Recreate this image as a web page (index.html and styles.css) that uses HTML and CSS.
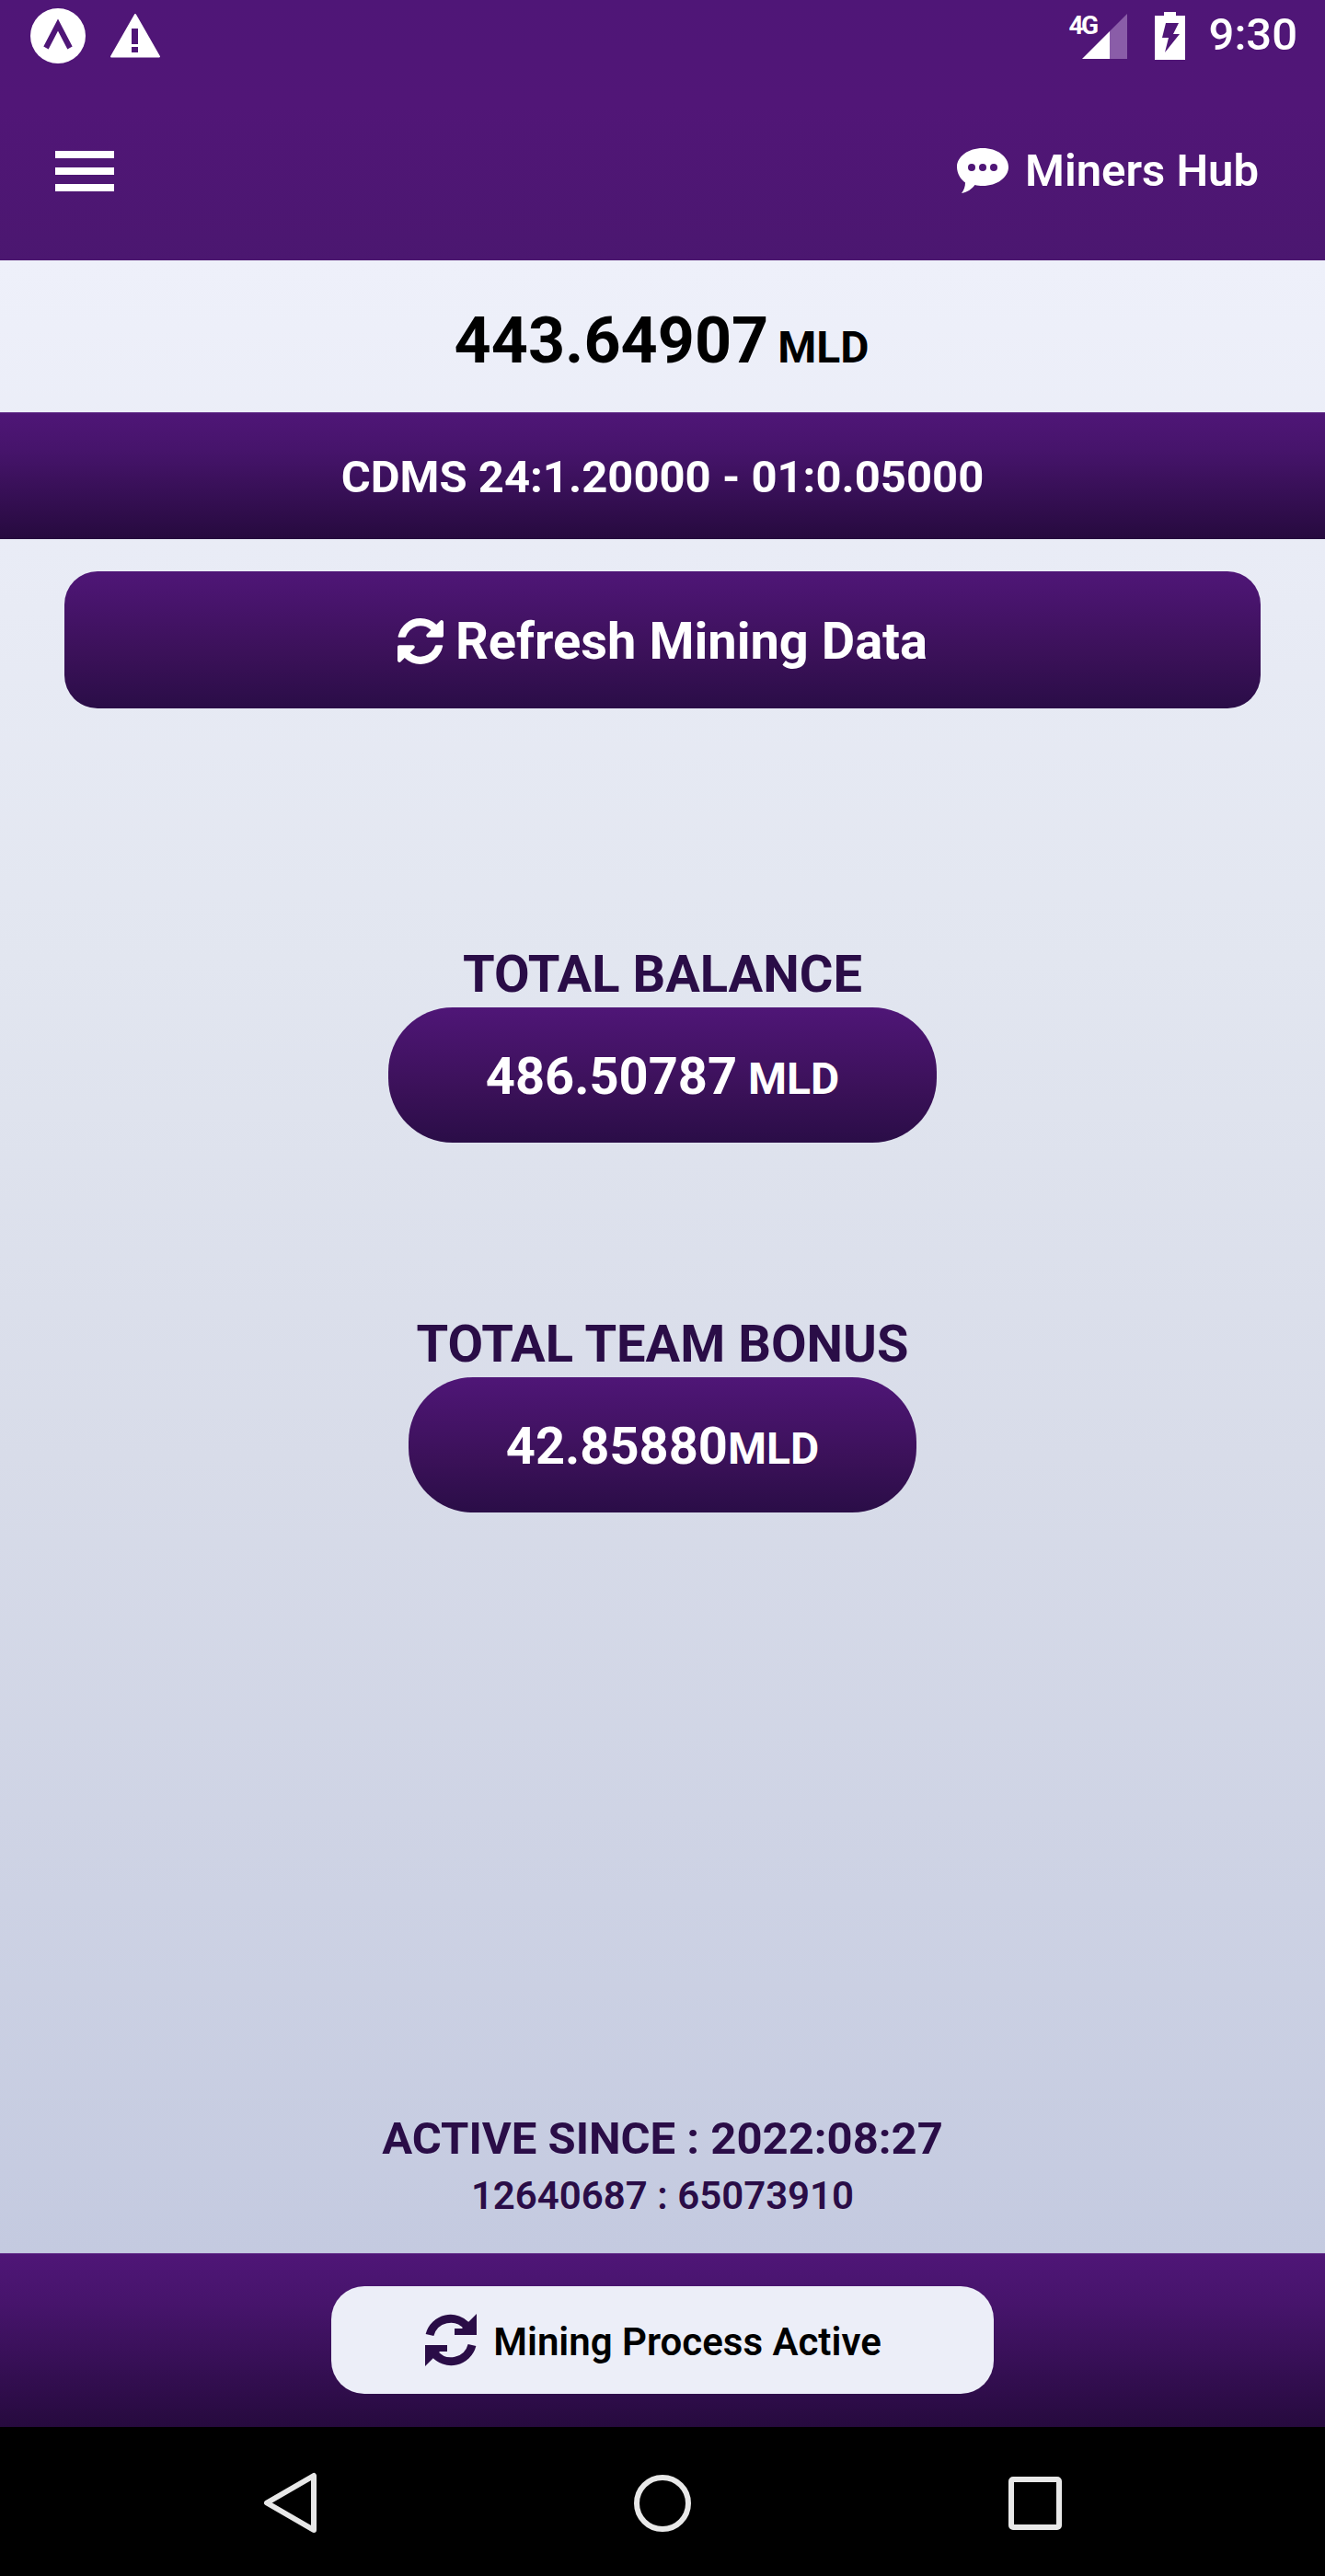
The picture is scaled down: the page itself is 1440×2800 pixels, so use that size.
FILE: index.html
```html
<!doctype html>
<html>
<head>
  <title>Miners Hub</title>
  <link rel="stylesheet" href="styles.css">
</head>
<body>
  <div class="app">
    <header class="top">
      <div class="status">
        <div class="status-left">
          <svg class="ic-logo" viewBox="0 0 60 60"><circle cx="30" cy="30" r="30" fill="#fff"/><path d="M17 43 30 18 43 43" fill="none" stroke="#4f1677" stroke-width="6"/></svg>
          <svg class="ic-warn" viewBox="0 0 54 48"><path d="M27 1 53 46.500H1z" fill="#fff" stroke="#fff" stroke-width="2" stroke-linejoin="round"/><rect x="23" y="16" width="7" height="17" fill="#4f1677"/><rect x="23" y="36" width="7" height="6" fill="#4f1677"/></svg>
        </div>
        <div class="status-right">
          <div class="signal">
            <span class="net">4G</span>
            <svg class="ic-signal" viewBox="0 0 49 49"><path d="M0 49 30 19V49z" fill="#fff"/><path d="M30 19 49 0V49H30z" fill="#8a5da8"/></svg>
          </div>
          <svg class="ic-battery" viewBox="0 0 33 52"><path d="M10 0h13v4h10v48H0V4h10z" fill="#fff"/><path d="M12 12h14l-6 12h7L11 44l4-16H8z" fill="#4f1677"/></svg>
          <span class="time">9:30</span>
        </div>
      </div>
      <div class="toolbar">
        <div class="burger"><i></i><i></i><i></i></div>
        <div class="hub">
          <svg class="ic-chat" viewBox="13 13 56 49"><path d="M41 13c15.500 0 28 9 28 20.500S56.500 54 41 54c-3 0-6-.3-8.500-1-3 4-8 8-14.500 9 2.500-3 4-7 4-11.500C17 47 13 40.500 13 33.500 13 22 25.500 13 41 13z" fill="#fff"/><circle cx="29" cy="34" r="4" fill="#4f1677"/><circle cx="41" cy="34" r="4" fill="#4f1677"/><circle cx="53" cy="34" r="4" fill="#4f1677"/></svg>
          <span>Miners Hub</span>
        </div>
      </div>
    </header>

    <main class="content">
      <div class="wallet"><span class="wallet-num">443.64907</span><span class="wallet-unit">MLD</span></div>
      <div class="band rate">CDMS 24:1.20000 - 01:0.05000</div>
      <button class="refresh">
        <svg class="ic-refresh" viewBox="128 128 1536 1536"><path fill="#fff" d="M1639 1056q0 5-1 7-64 268-268 434.500t-478 166.500q-146 0-282.500-55t-243.500-157l-129 129q-19 19-45 19t-45-19-19-45v-448q0-26 19-45t45-19h448q26 0 45 19t19 45-19 45l-137 137q71 66 161 102t187 36q134 0 250-65t186-179q11-17 53-117 8-23 30-23h192q13 0 22.500 9.500t9.500 22.500zm25-800v448q0 26-19 45t-45 19h-448q-26 0-45-19t-19-45 19-45l138-138q-148-137-349-137-134 0-250 65t-186 179q-11 17-53 117-8 23-30 23h-199q-13 0-22.500-9.500t-9.500-22.500v-7q65-268 270-434.500t480-166.500q146 0 284 55.500t245 156.500l130-129q19-19 45-19t45 19 19 45z"/></svg>
        <span>Refresh Mining Data</span>
      </button>

      <section class="stat stat-first">
        <h2>TOTAL BALANCE</h2>
        <div class="pill"><span class="pill-num">486.50787</span><span class="pill-unit spaced">MLD</span></div>
      </section>
      <section class="stat stat-second">
        <h2>TOTAL TEAM BONUS</h2>
        <div class="pill"><span class="pill-num">42.85880</span><span class="pill-unit">MLD</span></div>
      </section>

      <div class="since">
        <div class="since-date">ACTIVE SINCE : 2022:08:27</div>
        <div class="since-ids">12640687 : 65073910</div>
      </div>
    </main>

    <div class="band process">
      <button class="process-btn">
        <svg class="ic-sync" viewBox="12 10 56 57"><g><path d="M17 33A23.500 23.500 0 0 1 58 24" fill="none" stroke="#2a0d47" stroke-width="9"/><path d="M68 10V33H44V26H52z" fill="#2a0d47"/></g><g transform="rotate(180 40 38.500)"><path d="M17 33A23.500 23.500 0 0 1 58 24" fill="none" stroke="#2a0d47" stroke-width="9"/><path d="M68 10V33H44V26H52z" fill="#2a0d47"/></g></svg>
        <span>Mining Process Active</span>
      </button>
    </div>

    <nav class="navbar">
      <svg class="ic-back" viewBox="0 0 58 67"><path d="M55 4V63L4 33.500z" fill="none" stroke="#e8e8e8" stroke-width="6" stroke-linejoin="round"/></svg>
      <svg class="ic-home" viewBox="0 0 62 62"><circle cx="31" cy="31" r="28" fill="none" stroke="#e8e8e8" stroke-width="6"/></svg>
      <svg class="ic-recent" viewBox="0 0 58 58"><rect x="3" y="3" width="52" height="52" rx="2" fill="none" stroke="#e8e8e8" stroke-width="6"/></svg>
    </nav>
  </div>
</body>
</html>
```

FILE: styles.css
```css
* { box-sizing: border-box; }
body { margin: 0; background: #000; font-family: Roboto, "Liberation Sans", sans-serif; }
svg { display: block; flex: none; }
button { font-family: inherit; border: none; cursor: pointer; }

.app { width: 1440px; height: 2800px; display: flex; flex-direction: column; }

.top { height: 283px; color: #fff; background: linear-gradient(#4f1677, #511677 40%, #4b1770); }
.status { height: 88px; display: flex; justify-content: space-between; align-items: flex-start; padding: 9px 30px 0 33px; }
.status-left { display: flex; gap: 27px; }
.ic-logo { width: 60px; height: 60px; }
.ic-warn { width: 54px; height: 48px; margin-top: 6px; }
.status-right { display: flex; align-items: flex-start; }
.signal { position: relative; width: 49px; margin-top: 6px; }
.ic-signal { width: 49px; height: 49px; }
.net { position: absolute; left: -14px; top: -2px; font-size: 28px; line-height: 30px; font-weight: 700; letter-spacing: -2.500px; }
.ic-battery { width: 33px; height: 52px; margin: 4px 0 0 30px; }
.time { margin: 0 0 0 26px; font-size: 49px; line-height: 58px; font-weight: 500; }

.toolbar { height: 195px; display: flex; justify-content: space-between; align-items: center; padding: 0 72px 0 60px; }
.burger { width: 64px; display: flex; flex-direction: column; gap: 10px; }
.burger i { display: block; height: 8px; background: #fff; }
.hub { display: flex; align-items: center; gap: 18px; font-size: 49px; font-weight: 600; }
.ic-chat { width: 56px; height: 49px; }

.content { flex: 1; display: flex; flex-direction: column; background: linear-gradient(#eef0fa, #e2e6f0 35%, #d8dce9 60%, #c4cae0); }
.wallet { height: 165px; display: flex; justify-content: center; align-items: baseline; gap: 10px; padding: 47px 2px 0 0; color: #000; font-weight: 700; line-height: 80px; }
.wallet-num { font-size: 70px; }
.wallet-unit { font-size: 48px; }

.band { background: linear-gradient(#4f1677, #46146b 30%, #260a3e); border-top: 1px solid #6a3a90; }
.rate { height: 138px; padding-top: 2px; display: flex; justify-content: center; align-items: center; color: #fff; font-size: 49px; font-weight: 700; }

.refresh { height: 149px; margin: 35px 70px 0; padding-top: 4px; display: flex; justify-content: center; align-items: center; gap: 13px; color: #fff; font-size: 56px; font-weight: 700; border-radius: 36px; background: linear-gradient(#4f1677, #3b1159 60%, #2a0d47); }
.ic-refresh { width: 50px; height: 50px; }

.stat { display: flex; flex-direction: column; align-items: center; }
.stat-first { margin-top: 259px; }
.stat-second { margin-top: 189px; }
.stat h2 { margin: 0 0 6px; color: #2a0d47; font-size: 56px; line-height: 60px; font-weight: 700; }
.pill { height: 147px; padding: 6px 106px 0; display: flex; align-items: baseline; line-height: 139px; color: #fff; font-weight: 700; border-radius: 70px; background: linear-gradient(#4f1677, #3b1159 60%, #2a0d47); }
.pill-num { font-size: 56px; }
.pill-unit { font-size: 48px; }
.pill-unit.spaced { margin-left: 12px; }

.since { margin-top: auto; padding-bottom: 37px; text-align: center; color: #2a0d47; font-weight: 700; }
.since-date { font-size: 49px; line-height: 60px; }
.since-ids { margin-top: 7px; font-size: 42px; line-height: 50px; font-weight: 600; }

.process { height: 189px; padding-top: 35px; display: flex; justify-content: center; align-items: flex-start; }
.process-btn { width: 720px; height: 117px; padding: 3px 20px 0 0; display: flex; justify-content: center; align-items: center; gap: 18px; color: #000; background: #eceef8; font-size: 42px; font-weight: 600; border-radius: 36px; }
.ic-sync { width: 56px; height: 57px; margin-top: -3px; }

.navbar { height: 162px; padding: 3px 112px 0; display: grid; grid-template-columns: repeat(3, 1fr); justify-items: center; align-items: center; background: #000; }
.ic-back { width: 58px; height: 67px; }
.ic-home { width: 62px; height: 62px; }
.ic-recent { width: 58px; height: 58px; }
```
